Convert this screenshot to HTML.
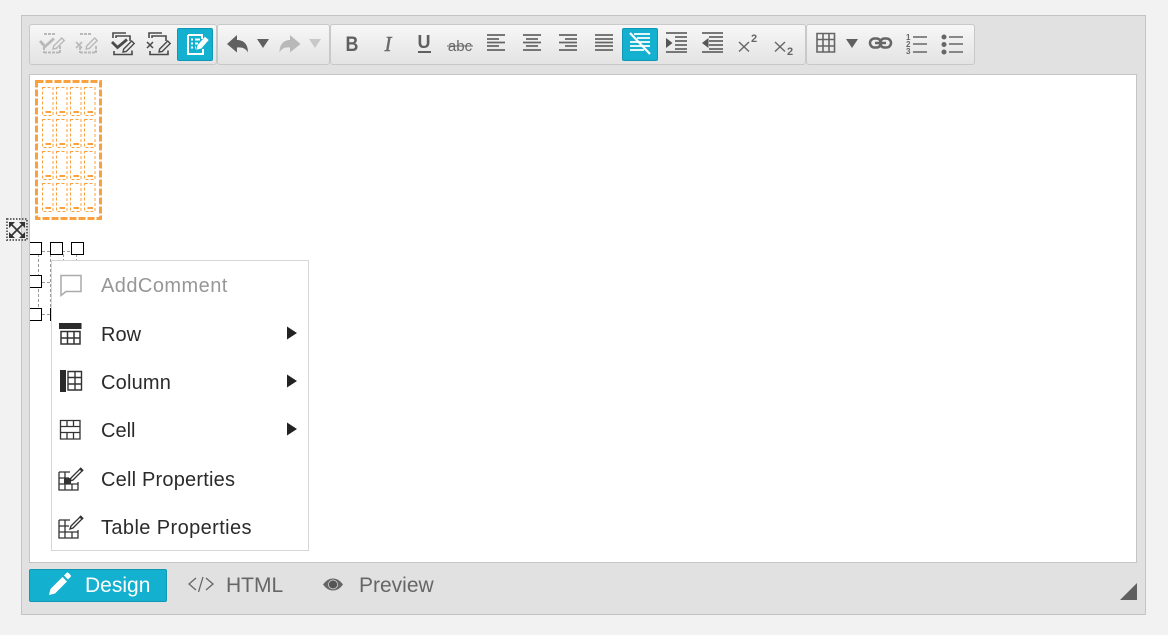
<!DOCTYPE html>
<html><head><meta charset="utf-8">
<style>
html,body{margin:0;padding:0;width:1168px;height:635px;overflow:hidden;background:#f2f2f2;font-family:"Liberation Sans",sans-serif}
div{position:absolute;box-sizing:border-box}
.grp{top:24px;height:41px;border:1px solid #c8c8c8;border-radius:3px;background:linear-gradient(#f7f7f7,#e3e3e3)}
.act{background:#14b0cf;border:1px solid #0f97b3;border-radius:2px;top:28px;height:33px;width:36px}
.m{left:101px;font-size:20px;line-height:24px;color:#2b2b2b;white-space:nowrap}
.t{font-size:21px;line-height:24px;color:#666;white-space:nowrap}
.h{width:13px;height:13px;border:1px solid #000;background:#fff}
svg{position:absolute;left:0;top:0}
</style></head><body>
<div style="left:21px;top:15px;width:1125px;height:600px;background:#e1e1e1;border:1px solid #c4c4c4"></div>
<div class="grp" style="left:29px;width:188px"></div>
<div class="grp" style="left:217px;width:113px"></div>
<div class="grp" style="left:330px;width:476px"></div>
<div class="grp" style="left:806px;width:169px"></div>
<div class="act" style="left:177px"></div>
<div class="act" style="left:622px"></div>
<div style="left:29px;top:74px;width:1108px;height:489px;background:#fff;border:1px solid #c4c4c4"></div>
<div style="left:29px;top:569px;width:138px;height:33px;background:#14b0cf;border:1px solid #0f97b3;border-radius:2px"></div>

<svg width="1168" height="635" viewBox="0 0 1168 635" fill="none">
<defs>
<g id="pen"><path d="M0 0l.7-3 8-8 2.500 2.500-8 8z" stroke-width="1.400"/></g>
<g id="cell"><rect x=".5" y=".5" width="10.500" height="28" stroke="#f9a13f" stroke-dasharray="3 2"/><rect x="3.500" y="24" width="5.500" height="2" fill="#f9a13f"/></g>
<g id="row4"><use href="#cell" x="42" /><use href="#cell" x="56"/><use href="#cell" x="70"/><use href="#cell" x="84" /></g>
</defs>
<!-- toolbar group 1 -->
<g stroke="#b9b9b9" stroke-width="2" fill="none">
<path d="M44 34h12M44 52.500h16M44 47v6M60 46v7" stroke-dasharray="3 1"/>
<path d="M40 41l5 5.500 9-8" stroke-width="2.800"/>
<use href="#pen" x="53" y="49"/>
<path d="M80 34h12M80 52.500h16M80 47v6M96 46v7" stroke-dasharray="3 1"/>
<path d="M76 42l6 6M82 42l-6 6" stroke-width="1.600"/>
<use href="#pen" x="86" y="49"/>
</g>
<path d="M237 35l-10 9 10 8.500v-5c5-.5 9 1 11 5 0-8-4-12.500-11-12.500z" fill="#606060"/>
<path d="M257 39h12l-6 9z" fill="#606060"/>
<path d="M290 35l10.500 9-10.500 8.500v-5c-5-.5-8.500 1-10.500 5 0-8 4-12.500 10.500-12.500z" fill="#b9b9b9"/>
<path d="M309 39h12l-6 9z" fill="#c8c8c8"/>
<g stroke="#4a4a4a" stroke-width="1.600">
<path d="M113 38v-5h13M116 38v-2h14v5M114 51v3.500h18v-4"/>
<path d="M112 42l5.500 5.500 9.500-8" stroke-width="2.800"/>
<use href="#pen" x="123" y="52"/>
<path d="M149 38v-5h13M152 38v-2h14v5M150 51v3.500h18v-4"/>
<path d="M147 42l6 6M153 42l-6 6" stroke-width="1.500"/>
<use href="#pen" x="159" y="52"/>
</g>
<g stroke="#fff" fill="none">
<path d="M188 35h14v4M188 35v19h15v-5" stroke-width="2"/>
<path d="M191 39.500h2M195 39.500h5M191 43.500h2M195 43.500h3M191 47.500h2M195 47.500h1" stroke-width="2"/>
<path d="M197 49l1-3.500 7-8 3 2.500-7 8z" fill="#fff" stroke-width="1"/>
</g>
<!-- text format -->
<text transform="translate(352 51) scale(.85 1)" font-family="Liberation Sans" font-size="21" font-weight="700" fill="#5f5f5f" text-anchor="middle">B</text>
<text x="388" y="51" font-family="Liberation Serif" font-size="21" font-style="italic" fill="#6a6a6a" stroke="#6a6a6a" stroke-width=".4" text-anchor="middle">I</text>
<text x="424" y="48" font-family="Liberation Sans" font-size="18" font-weight="700" fill="#5f5f5f" text-anchor="middle">U</text>
<path d="M418 52h13" stroke="#5f5f5f" stroke-width="2"/>
<text x="460" y="51" font-family="Liberation Sans" font-size="15" fill="#666" text-anchor="middle">abc</text>
<path d="M447 46h26" stroke="#666" stroke-width="1"/>
<g stroke="#666" stroke-width="1.700">
<path d="M487 35h18M487 39h12M487 42.500h18M487 46h12M487 50h18"/>
<path d="M523 35h18M526 39h12M523 42.500h18M526 46h12M523 50h18"/>
<path d="M559 35h18M565 39h12M559 42.500h18M565 46h12M559 50h18"/>
<path d="M595 35h18M595 39h18M595 42.500h18M595 46h18M595 50h18"/>
<path d="M666 33h21M675 37h12M675 41h12M675 45h12M675 49h12M666 52h21"/>
<path d="M702 33h21M709 37h14M709 41h14M709 45h14M709 49h14M702 52h21"/>
</g>
<path d="M666 38l6.500 5-6.500 5zM708.500 38l-6.500 5 6.500 5z" fill="#555"/>
<g stroke="#fff" stroke-width="1.800">
<path d="M634 34h16M637 38h13M630 42h20M630 46h20M630 50h14"/>
<path d="M630 33l20 21" stroke-width="2.200"/>
</g>
<path d="M739 42l10 9.500M749 42l-10 9.500M775 42l10 9.500M785 42l-10 9.500" stroke="#666" stroke-width="1.400"/>
<text x="751" y="42" font-family="Liberation Sans" font-size="11" font-weight="700" fill="#666">2</text>
<text x="787" y="55" font-family="Liberation Sans" font-size="11" font-weight="700" fill="#666">2</text>
<!-- group 4 -->
<g stroke="#666" stroke-width="1.600">
<path d="M817 33.500h17.500v18.500h-17.500zM817 39.500h17.500M817 46h17.500M823 33.500v18.500M829 33.500v18.500"/>
</g>
<path d="M846 39h12l-6 9z" fill="#606060"/>
<rect x="870" y="38.500" width="11" height="9" rx="4.500" stroke="#666" stroke-width="2.500"/>
<rect x="880" y="38.500" width="11" height="9" rx="4.500" stroke="#666" stroke-width="2.500"/>
<path d="M875 43h11" stroke="#666" stroke-width="2.500"/>
<g font-family="Liberation Sans" font-size="8" fill="#666" font-weight="700">
<text x="906" y="40">1</text><text x="906" y="47">2</text><text x="906" y="54">3</text>
</g>
<path d="M913 37h14M913 44h14M913 52h14M949 37h14M949 44h14M949 52h14" stroke="#666" stroke-width="1.600"/>
<circle cx="944" cy="37" r="2.500" fill="#666"/><circle cx="944" cy="44.500" r="2.500" fill="#666"/><circle cx="944" cy="52" r="2.500" fill="#666"/>

<!-- orange table -->
<rect x="36.500" y="81.500" width="64" height="137" stroke="#f9a13f" stroke-width="3" stroke-dasharray="7 2"/>
<use href="#row4" y="87"/><use href="#row4" y="119"/><use href="#row4" y="151"/><use href="#row4" y="183"/>
<!-- resize handle -->
<rect x="7" y="219" width="20" height="21" stroke="#666" stroke-width="2" stroke-dasharray="1.500 1.500"/>
<path d="M11 224l12 12M23 224l-12 12" stroke="#333" stroke-width="1.600"/>
<path d="M9 222h6l-6 6zM25 222h-6l6 6zM9 238h6l-6-6zM25 238h-6l6-6z" fill="#333"/>
<!-- dashed table handles -->
<g stroke="#999" stroke-dasharray="3 2">
<path d="M42 251.500h30M38.500 254v54M42 282.500h9M50.500 254v54M63.500 254v6M76.500 254v6M42 314.500h8"/>
</g>
<path d="M50.500 308v13" stroke="#000"/>
</svg>

<div class="h" style="left:30px;top:242px;width:12px;border-left:none"></div>
<div class="h" style="left:50px;top:242px"></div>
<div class="h" style="left:71px;top:242px"></div>
<div class="h" style="left:30px;top:275px;width:12px;border-left:none"></div>
<div class="h" style="left:30px;top:308px;width:12px;border-left:none"></div>

<div style="left:51px;top:260px;width:258px;height:291px;background:#fff;border:1px solid #d6d6d6"></div>
<div class="m" style="top:274px;color:#979797;letter-spacing:.45px">AddComment</div>
<div class="m" style="top:323px">Row</div>
<div class="m" style="top:371px;letter-spacing:.2px">Column</div>
<div class="m" style="top:419px">Cell</div>
<div class="m" style="top:468px;letter-spacing:.2px">Cell Properties</div>
<div class="m" style="top:516px;letter-spacing:.4px">Table Properties</div>

<svg width="1168" height="635" viewBox="0 0 1168 635" fill="none">
<path d="M61 275.500h20v16H66l-5 4z" stroke="#aaa" stroke-width="1.500"/>
<rect x="59" y="323" width="22.500" height="6" fill="#2a2a2a"/>
<path d="M61 331.500h19v12.500H61zM61 338h19M67.500 331.500v12.500M74 331.500v12.500" stroke="#333" stroke-width="1.500"/>
<rect x="60" y="370" width="6" height="22" fill="#2a2a2a"/>
<path d="M68 371.500h13.500v18.500H68zM68 377.500h13.500M68 384h13.500M75 371.500v18.500" stroke="#333" stroke-width="1.400"/>
<path d="M60.500 420.500h19.500v18.500H60.500zM60.500 426.500h19.500M60.500 432.500h19.500M67 420.500v6M73.500 420.500v6M67 432.500v6.500M73.500 432.500v6.500" stroke="#333" stroke-width="1.300"/>
<g stroke="#333" stroke-width="1.300">
<path d="M59 472h11M78 482v8H59v-18M59 478h10M59 484h19M65 472v18M72 484v6"/>
<path d="M70 481l1-3 9-9 2 2-9 9z" fill="#fff"/>
<path d="M80 468l3 3" stroke-width="2"/>
</g>
<rect x="64" y="478" width="7" height="6" fill="#333"/>
<g stroke="#333" stroke-width="1.300">
<path d="M59 520h11M78 530v8H59v-18M59 526h10M59 532h19M65 520v18M72 532v6"/>
<path d="M70 529l1-3 9-9 2 2-9 9z" fill="#fff"/>
<path d="M80 516l3 3" stroke-width="2"/>
</g>
<path d="M287 326.500l10 6.500-10 6.500zM287 374.500l10 6.500-10 6.500zM287 422.500l10 6.500-10 6.500z" fill="#222"/>
<!-- bottom icons -->
<path d="M49 595l1.500-6 12-12 4.500 4.500-12 12z" fill="#fff"/>
<path d="M64 575.500l2.500-2.500q1-1 2 0l2 2q1 1 0 2l-2.500 2.500z" fill="#fff"/>
<path d="M196 578l-7 6 7 6M206 578l7 6-7 6M203 577l-4.500 15" stroke="#666" stroke-width="1.300"/>
<path d="M323 584.500c3-4 6-6 10-6s7 2 10 6c-3 4-6 6-10 6s-7-2-10-6z" fill="#666"/>
<circle cx="333" cy="584.500" r="4.500" fill="#555" stroke="#e1e1e1" stroke-width=".7"/>
<path d="M1137 583v17h-17z" fill="#5f5f5f"/>
</svg>

<div class="t" style="left:85px;top:574px;color:#fff">Design</div>
<div class="t" style="left:226px;top:574px">HTML</div>
<div class="t" style="left:359px;top:574px">Preview</div>
</body></html>
